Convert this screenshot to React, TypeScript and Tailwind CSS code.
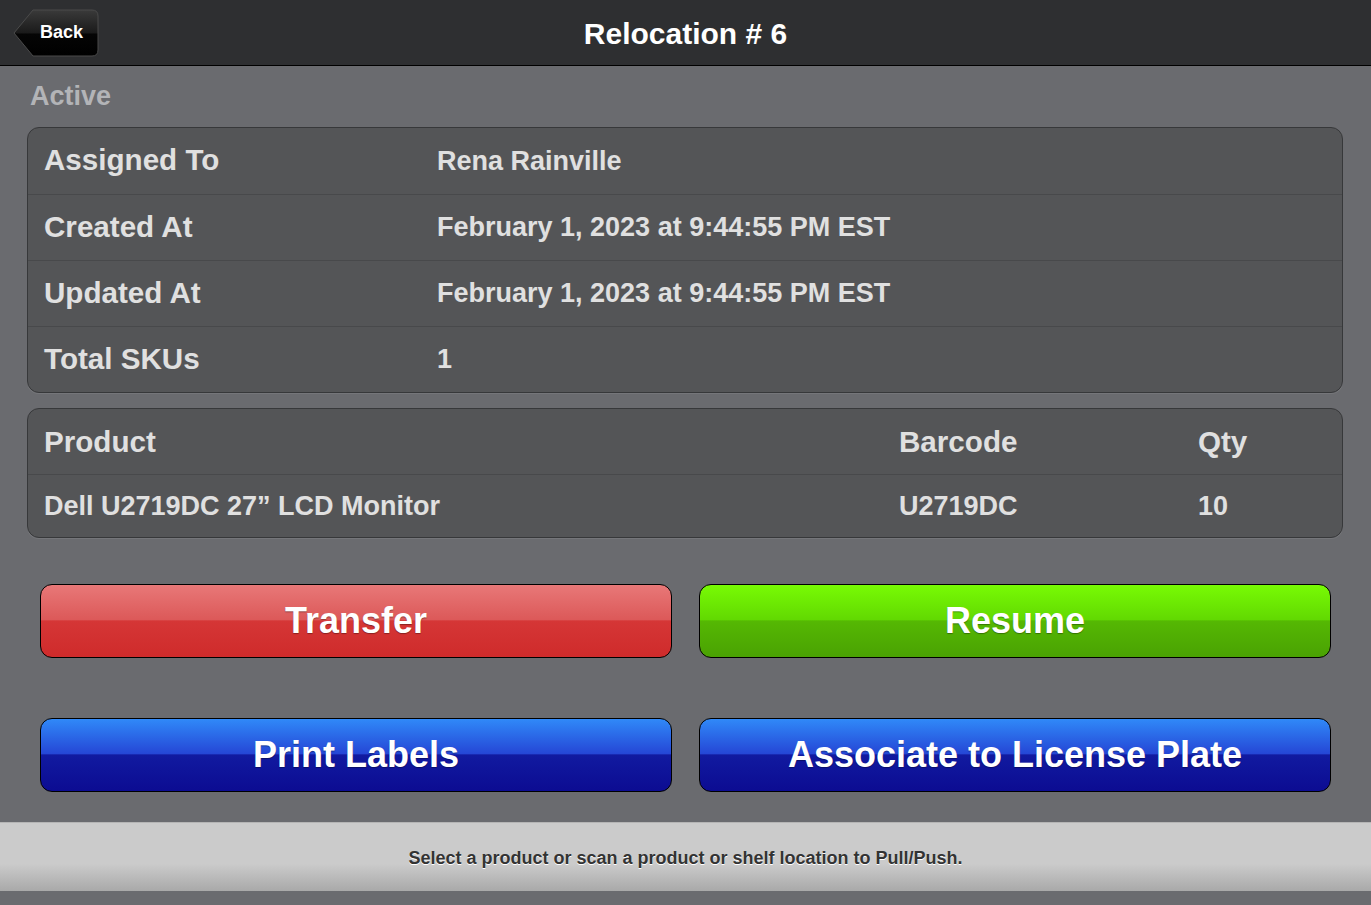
const details = [
  { label: 'Assigned To', value: 'Rena Rainville' },
  { label: 'Created At', value: 'February 1, 2023 at 9:44:55 PM EST' },
  { label: 'Updated At', value: 'February 1, 2023 at 9:44:55 PM EST' },
  { label: 'Total SKUs', value: '1' },
];

function BackButton() {
  return (
    <button className="relative w-[86px] h-[48px] ml-[13px] flex items-center">
      <svg className="absolute inset-0" width="86" height="48" viewBox="0 0 86 48">
        <defs>
          <linearGradient id="backg" x1="0" y1="0" x2="0" y2="1">
            <stop offset="0" stopColor="#3a3a3a" />
            <stop offset="0.5" stopColor="#1a1a1a" />
            <stop offset="0.52" stopColor="#050505" />
            <stop offset="1" stopColor="#000" />
          </linearGradient>
        </defs>
        <path
          d="M1 24 L20 1 H79 Q85 1 85 7 V41 Q85 47 79 47 H20 Z"
          fill="url(#backg)"
          stroke="#4a4a4a"
          strokeWidth="1"
        />
      </svg>
      <span className="relative pl-[27px] text-[18px] font-bold text-white">Back</span>
    </button>
  );
}

function ActionButton({ label, tone }: { label: string; tone: 'red' | 'green' | 'blue' }) {
  const styles = {
    red: 'bg-[linear-gradient(to_bottom,#e87878_0%,#dc5959_48%,#d53636_50%,#cf2b2b_100%)]',
    green: 'bg-[linear-gradient(to_bottom,#78fb04_0%,#62d902_48%,#55b803_50%,#4aa203_100%)]',
    blue: 'bg-[linear-gradient(to_bottom,#3089f8_0%,#2547d6_48%,#111aa0_50%,#0c0c92_100%)]',
  };
  return (
    <button
      className={`h-[74px] rounded-[12px] border border-black ${styles[tone]} text-white font-bold text-[36px] [text-shadow:0_1px_1px_rgba(0,0,0,0.35)]`}
    >
      {label}
    </button>
  );
}

export default function App() {
  return (
    <div className="w-[1371px] h-[905px] bg-[#6a6b6f] flex flex-col overflow-hidden font-['Liberation_Sans',Arial,sans-serif]">
      {/* Header */}
      <header className="relative h-[66px] shrink-0 bg-[#2e2f31] border-b border-black flex items-center">
        <BackButton />
        <h1 className="absolute left-0 right-0 top-[16px] text-center text-[30px] leading-[36px] font-bold text-white pointer-events-none">
          Relocation # 6
        </h1>
      </header>

      <main className="flex-1 flex flex-col">
        <h2 className="px-[30px] pt-[14px] h-[61px] text-[27px] leading-[32px] font-bold text-[#b3b4b7]">Active</h2>

        {/* Details table */}
        <div className="mx-[27px] w-[1316px] bg-[#545557] border border-[#37383a] rounded-[12px] shadow-[0_1px_0_rgba(255,255,255,0.08)]">
          {details.map((row, i) => (
            <div
              key={row.label}
              className={`h-[66px] flex items-center pl-[16px] text-[#e0e0e0] font-bold ${i > 0 ? 'border-t border-[#48494b]' : ''}`}
            >
              <span className="w-[393px] text-[29.6px] leading-[32px] -mt-[2px]">{row.label}</span>
              <span className="text-[27px]">{row.value}</span>
            </div>
          ))}
        </div>

        {/* Products table */}
        <div className="mt-[15px] mx-[27px] w-[1316px] bg-[#545557] border border-[#37383a] rounded-[12px] shadow-[0_1px_0_rgba(255,255,255,0.08)] text-[#e0e0e0] font-bold">
          <div className="h-[65px] grid grid-cols-[855px_299px_1fr] items-center pl-[16px] text-[29.6px] leading-[32px]">
            <span>Product</span>
            <span>Barcode</span>
            <span>Qty</span>
          </div>
          <div className="h-[63px] grid grid-cols-[855px_299px_1fr] items-center pl-[16px] border-t border-[#48494b] text-[27px]">
            <span>Dell U2719DC 27” LCD Monitor</span>
            <span>U2719DC</span>
            <span>10</span>
          </div>
        </div>

        {/* Actions */}
        <div className="mt-[46px] ml-[40px] mr-[40px] grid grid-cols-2 gap-x-[27px] gap-y-[60px]">
          <ActionButton label="Transfer" tone="red" />
          <ActionButton label="Resume" tone="green" />
          <ActionButton label="Print Labels" tone="blue" />
          <ActionButton label="Associate to License Plate" tone="blue" />
        </div>
      </main>

      {/* Footer */}
      <footer className="h-[69px] mb-[14px] shrink-0 bg-[linear-gradient(to_bottom,#cbcbcb_0%,#cbcbcb_60%,#a9a9a9_100%)] border-t border-[#b5b5b5] flex items-center justify-center">
        <p className="pt-[2px] text-[18px] font-bold text-[#333] [text-shadow:0_1px_0_#fff]">
          Select a product or scan a product or shelf location to Pull/Push.
        </p>
      </footer>
    </div>
  );
}
